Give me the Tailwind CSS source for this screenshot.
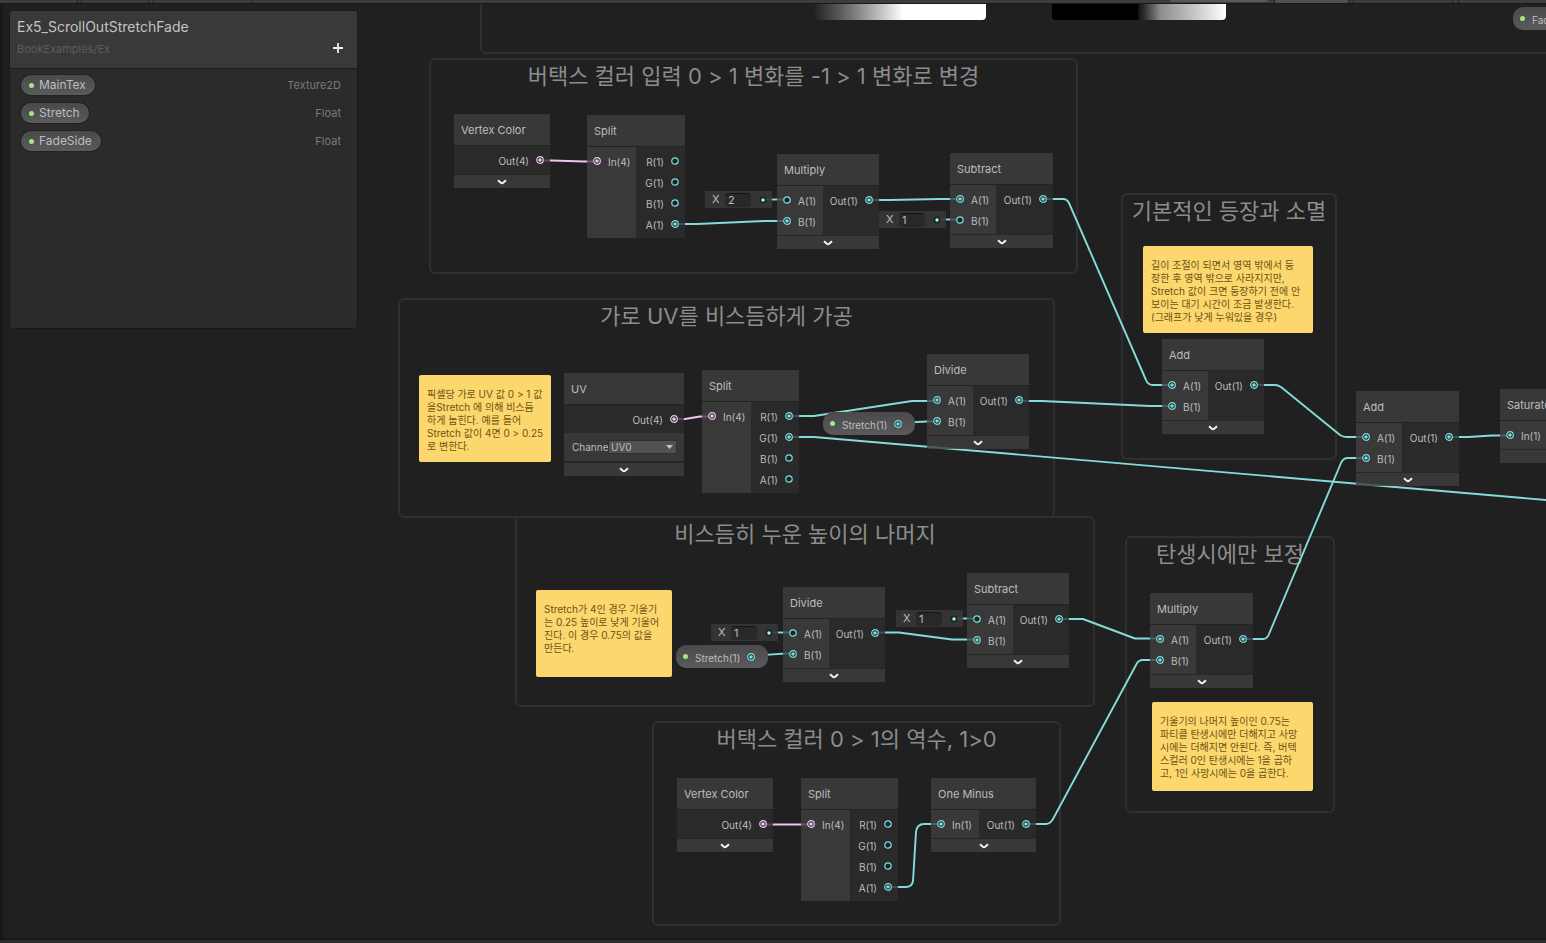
<!DOCTYPE html>
<html lang="ko">
<head>
<meta charset="utf-8">
<title>Ex5_ScrollOutStretchFade</title>
<script src="https://cdn.jsdelivr.net/npm/@tailwindcss/browser@4"></script>
</head>
<body class="flex h-screen flex-col overflow-hidden bg-[#202020] font-['Inter','Noto_Sans_CJK_KR',sans-serif] text-[#bdbdbd]">

<!-- Symbols shared by all nodes -->
<svg class="hidden" aria-hidden="true">
  <symbol id="port-empty" viewBox="0 0 10 10"><circle cx="5" cy="5" r="3.2" fill="#14282a" stroke="currentColor" stroke-width="1.2"/></symbol>
  <symbol id="port-full" viewBox="0 0 10 10"><circle cx="5" cy="5" r="3.3" fill="#14282a" stroke="currentColor" stroke-width="1.2"/><circle cx="5" cy="5" r="1.8" fill="currentColor"/></symbol>
  <symbol id="port-dot" viewBox="0 0 10 10"><circle cx="5" cy="5" r="3.4" fill="#14282a"/><circle cx="5" cy="5" r="1.7" fill="#b4f0ee"/></symbol>
  <symbol id="chevron" viewBox="0 0 10 6"><path d="M1 1.2 L3.6 3.6 Q5 4.8 6.4 3.6 L9 1.2" fill="none" stroke="#f2f2f2" stroke-width="2"/></symbol>
</svg>

<!-- Lower edge of the toolbar -->
<header class="flex h-1 shrink-0 border-b border-[#191919] bg-[#3c3c3c]">
  <div class="ml-[77px] w-[5px] border-x border-[#1f1f1f]"></div>
  <div class="ml-[66px] w-[6px] border-x border-[#1f1f1f]"></div>
  <div class="ml-[97px] w-px bg-[#2a2a2a]"></div>
  <div class="ml-[69px] w-px bg-[#333333]"></div>
  <div class="ml-auto h-[2px] w-[98px] rounded-b bg-[#585858]"></div>
  <div class="ml-[6px] mr-[87px] flex">
    <div class="w-[75px] border-x border-[#1f1f1f] bg-[#505050]"></div>
    <div class="ml-[4px] w-[100px] border-x border-[#1f1f1f]"></div>
    <div class="ml-[5px] w-px bg-[#1f1f1f]"></div>
  </div>
</header>

<main class="relative min-h-0 flex-1 overflow-hidden border-l-[3px] border-[#181818]">
  <div id="graph" class="absolute -left-[3px] -top-1 h-full w-full">
    <div id="groups"></div>

    <svg class="pointer-events-none absolute left-0 top-0 overflow-visible" width="1546" height="943" fill="none" stroke="#84dcd8" stroke-width="1.9" stroke-linejoin="round" aria-hidden="true">
      <g stroke="#f3c4ee">
        <path d="M539 160.5H552L584 161.5H597"/>
        <path d="M673 419H685L700 416.5H712"/>
        <path d="M763 824.5H811"/>
      </g>
      <path d="M674 224H697L765 221H787"/>
      <path d="M763 199.5H787"/>
      <path d="M869 200H890L940 199H961"/>
      <path d="M937 219.5H961"/>
      <path d="M1043 199H1063Q1067 199 1069 203L1146 380Q1148 385 1153 385H1172"/>
      <path d="M1019 401H1042L1150 406H1172"/>
      <path d="M1254 385H1275Q1278 385 1281 387L1340 435Q1343 437 1346 437H1367"/>
      <path d="M1448 437H1468L1492 435.500H1510"/>
      <path d="M1242 639H1263Q1267 639 1269 634L1341 463Q1343 458 1348 458H1367"/>
      <path d="M1059 619H1083L1135 638.500H1161"/>
      <path d="M1025 824H1046Q1050 824 1053 819L1136 665Q1138 660 1143 660H1161"/>
      <path d="M789 416H814L912 401H937"/>
      <path d="M789 437H814L1546 500"/>
      <path d="M898 423L937 421"/>
      <path d="M750 656L793 653"/>
      <path d="M875 632.500H899L952 639.500H978"/>
      <path d="M769 632.500H793"/>
      <path d="M954 618.500H978"/>
      <path d="M888 887H906Q912 887 913 881L916 832Q917 824 924 824H941"/>
    </svg>

    <div class="absolute left-[813px] top-[4px] h-4 w-[173px] rounded-br bg-linear-to-r from-[#202020] via-white via-52% to-white"></div>
    <div class="absolute left-[1052px] top-[4px] h-4 w-[174px] rounded-b bg-black"></div>
    <div class="absolute left-[1138px] top-[4px] h-4 w-[88px] rounded-br bg-linear-to-r from-[#101010] via-[#8c8c8c] via-25% to-white"></div>

    <div id="nodes"></div>
  </div>

  <!-- Blackboard -->
  <section class="absolute left-[6px] top-[6px] flex h-[319px] w-[349px] flex-col rounded-[4px] border border-[#191919] bg-[#2b2b2b]">
    <div class="flex h-[58px] shrink-0 items-start justify-between rounded-t-[3px] border-b border-[#1c1c1c] bg-[#393939] px-[7px] pt-[7px]">
      <div>
        <h1 class="text-sm leading-[18px] text-[#c4c4c4]">Ex5_ScrollOutStretchFade</h1>
        <p class="mt-[5px] text-[11px] leading-4 text-[#5c5c5c]">BookExamples/Ex</p>
      </div>
      <button type="button" aria-label="Add property" class="mr-[7px] mt-[25px]"><svg class="size-[10px]" viewBox="0 0 10 10"><path d="M5 0V10M0 5H10" stroke="#eeeeee" stroke-width="1.800"/></svg></button>
    </div>
    <ul class="flex flex-col gap-2 pl-[11px] pr-4 pt-[6px] text-xs leading-5" id="props"></ul>
  </section>
</main>
<footer class="h-[5px] shrink-0 border-t-2 border-[#171717] bg-[#2c2c2c]"></footer>

<script>
const TEAL = 'text-[#7fdcdc]', PINK = 'text-[#f3c4ee]';
const icon = (id, cls) => `<svg class="${cls}" aria-hidden="true"><use href="#${id}"/></svg>`;
const port = (full, pink) => icon(full ? 'port-full' : 'port-empty', 'size-[10px] shrink-0 ' + (pink ? PINK : TEAL));
const at = (x, y, w, h) => `style="left:${x}px;top:${y}px;${w ? `width:${w}px;` : ''}${h ? `height:${h}px` : ''}"`;

const groups = [
  [480, -40, 1100, 94, ''],
  [429, 58, 649, 216, '버택스 컬러 입력 0 &gt; 1 변화를 -1 &gt; 1 변화로 변경'],
  [398, 298, 657, 220, '가로 UV를 비스듬하게 가공'],
  [515, 516, 580, 191, '비스듬히 누운 높이의 나머지'],
  [652, 721, 409, 205, '버택스 컬러 0 &gt; 1의 역수, 1&gt;0'],
  [1121, 193, 216, 267, '기본적인 등장과 소멸'],
  [1125, 536, 210, 277, '탄생시에만 보정'],
];
document.getElementById('groups').innerHTML = groups.map(([x, y, w, h, t]) =>
  `<section class="absolute rounded-md border-2 border-[#2f2f2f] text-center" ${at(x, y, w, h)}><h2 class="whitespace-nowrap text-[22px] leading-8 text-[#8c8c8c]">${t}</h2></section>`).join('');

// Each port is [label, connected, pink]
const A = ['A(1)', 1], B = ['B(1)', 1], OUT = ['Out(1)', 1];
const rgba = on => ['R(1)', 'G(1)', 'B(1)', 'A(1)'].map((n, i) => [n, on.includes(i)]);
const nodes = [
  { t: 'Vertex Color', x: 454, y: 114, w: 96, out: [['Out(4)', 1, 1]] },
  { t: 'Split', x: 587, y: 115, w: 98, inW: 49, in: [['In(4)', 1, 1]], out: rgba([3]), fixed: 1 },
  { t: 'Multiply', x: 777, y: 154, w: 102, inW: 46, in: [['A(1)', 0], B], out: [OUT] },
  { t: 'Subtract', x: 950, y: 153, w: 103, inW: 46, in: [A, ['B(1)', 0]], out: [OUT] },
  { t: 'UV', x: 564, y: 373, w: 120, out: [['Out(4)', 1, 1]], channel: 1 },
  { t: 'Split', x: 702, y: 370, w: 97, inW: 49, in: [['In(4)', 1, 1]], out: rgba([0, 1]), fixed: 1 },
  { t: 'Divide', x: 927, y: 354, w: 102, inW: 46, in: [A, B], out: [OUT] },
  { t: 'Add', x: 1162, y: 339, w: 102, inW: 46, in: [A, B], out: [OUT] },
  { t: 'Add', x: 1356, y: 391, w: 103, inW: 46, in: [A, B], out: [OUT] },
  { t: 'Saturate', x: 1500, y: 389, w: 104, inW: 48, in: [['In(1)', 1]], out: [OUT] },
  { t: 'Divide', x: 783, y: 587, w: 102, inW: 46, in: [['A(1)', 0], B], out: [OUT] },
  { t: 'Subtract', x: 967, y: 573, w: 102, inW: 46, in: [['A(1)', 0], B], out: [OUT] },
  { t: 'Multiply', x: 1150, y: 593, w: 103, inW: 46, in: [A, B], out: [OUT] },
  { t: 'Vertex Color', x: 677, y: 778, w: 96, out: [['Out(4)', 1, 1]] },
  { t: 'Split', x: 801, y: 778, w: 97, inW: 49, in: [['In(4)', 1, 1]], out: rgba([3]), fixed: 1 },
  { t: 'One Minus', x: 931, y: 778, w: 105, inW: 48, in: [['In(1)', 1]], out: [OUT] },
];
const inRow = ([n, on, pink]) => `<div class="flex h-[21px] items-center gap-[6px] pl-[5px]">${port(on, pink)}<span class="pt-[2px]">${n}</span></div>`;
const outRow = ([n, on, pink]) => `<div class="flex h-[21px] items-center justify-end gap-[6px] pr-[5px]"><span class="pt-[2px]">${n}</span>${port(on, pink)}</div>`;
const channel = `<div class="flex h-[29px] items-center border-b border-[#232323] bg-[#3e3e3e]/80 pl-2 pr-[7px] text-[10px]">
  <label for="channel" class="w-9 shrink-0 overflow-hidden">Channel</label>
  <div class="relative flex-1"><select id="channel" class="block h-[14px] w-full appearance-none border border-[#303030] bg-[#515151] pl-[2px] text-[10px] leading-3"><option>UV0</option></select>
  <svg class="pointer-events-none absolute right-1 top-[5px] h-1 w-[7px]" viewBox="0 0 7 4"><path d="M0 0H7L3.500 4Z" fill="#c4c4c4"/></svg></div></div>`;
const nodeHtml = n => `<article class="absolute text-[10px] leading-[14px]" ${at(n.x, n.y, n.w)}>
  <h3 class="h-8 whitespace-nowrap border-b border-[#232323] bg-[#3f3f3f]/80 pl-[7px] pt-[9px] text-[11px]">${n.t}</h3>
  <div class="flex">
    ${n.in ? `<div class="shrink-0 bg-[#404040]/80 pb-1 pt-[3px]" style="width:${n.inW}px">${n.in.map(inRow).join('')}</div>` : ''}
    <div class="flex-1 bg-[#2d2d2d]/80 pb-1 pt-[3px]">${n.out.map(outRow).join('')}</div>
  </div>
  ${n.channel ? channel : ''}
  ${n.fixed ? '' : `<button type="button" aria-label="Collapse ${n.t}" class="flex h-[14px] w-full items-center justify-center border-t border-[#272727] bg-[#3e3e3e]/80">${icon('chevron', 'h-[6px] w-[10px]')}</button>`}
</article>`;

const values = [[705, 191, 2], [879, 211, 1], [711, 624, 1], [896, 610, 1]];
const valueHtml = ([x, y, v], i) => `<div class="absolute flex h-[17px] w-[67px] items-center bg-[#363636]/90 pl-[7px] pr-[4px] text-[11px]" ${at(x, y)}>
  <label for="v${i}" class="w-[13px]">X</label><input id="v${i}" value="${v}" class="h-[14px] w-[26px] rounded-sm border-t border-[#141414] bg-[#282828] pl-[3px] text-[11px] leading-3 outline-none">
  <span class="ml-auto">${icon('port-dot', 'block size-[10px]')}</span></div>`;

const dot = '<span class="size-[5px] shrink-0 rounded-full bg-[#a0e886]"></span>';
const pills = [[823, 412, 'Stretch(1)'], [676, 645, 'Stretch(1)'], [1513, 7, 'FadeSide(1)']];
const pillHtml = ([x, y, t]) => `<div class="absolute flex h-[23px] items-center rounded-[10px] bg-linear-to-b from-[#4a4a4c] to-[#5a5a5c] pl-[7px] pr-3 text-[10px] leading-[14px]" ${at(x, y)}>
  ${dot}<span class="ml-[7px] mr-[6px] pt-[2px]">${t}</span>${port(1)}</div>`;

const notes = [
  [419, 375, 132, 87, '픽셀당 가로 UV 값 0 &gt; 1 값<br>을Stretch 에 의해 비스듬<br>하게 눕힌다. 예를 들어<br>Stretch 값이 4면 0 &gt; 0.25<br>로 변한다.'],
  [536, 590, 136, 87, 'Stretch가 4인 경우 기울기<br>는 0.25 높이로 낮게 기울어<br>진다. 이 경우 0.75의 값을<br>만든다.'],
  [1143, 246, 170, 87, '길이 조절이 되면서 영역 밖에서 등<br>장한 후 영역 밖으로 사라지지만,<br>Stretch 값이 크면 등장하기 전에 안<br>보이는 대기 시간이 조금 발생한다.<br>(그래프가 낮게 누워있을 경우)'],
  [1152, 702, 161, 89, '기울기의 나머지 높이인 0.75는<br>파티클 탄생시에만 더해지고 사망<br>시에는 더해지면 안된다. 즉, 버텍<br>스컬러 0인 탄생시에는 1을 곱하<br>고, 1인 사망시에는 0을 곱한다.'],
];
const noteHtml = ([x, y, w, h, t]) => `<p class="absolute whitespace-nowrap rounded-[2px] bg-[#fcd76e] pl-2 pt-[13px] text-[10px] leading-[13px] text-[#6b5413]" ${at(x, y, w, h)}>${t}</p>`;

document.getElementById('nodes').innerHTML =
  nodes.map(nodeHtml).join('') + values.map(valueHtml).join('') + pills.map(pillHtml).join('') + notes.map(noteHtml).join('');

document.getElementById('props').innerHTML = [['MainTex', 'Texture2D'], ['Stretch', 'Float'], ['FadeSide', 'Float']].map(([n, t]) =>
  `<li class="flex items-center justify-between"><span class="flex h-5 items-center gap-[5px] rounded-full bg-linear-to-b from-[#4a4a4c] to-[#5a5a5c] pl-2 pr-[9px] ring-1 ring-[#222222]">${dot}${n}</span><span class="text-[11px] text-[#7a7a7a]">${t}</span></li>`).join('');
</script>
</body>
</html>
